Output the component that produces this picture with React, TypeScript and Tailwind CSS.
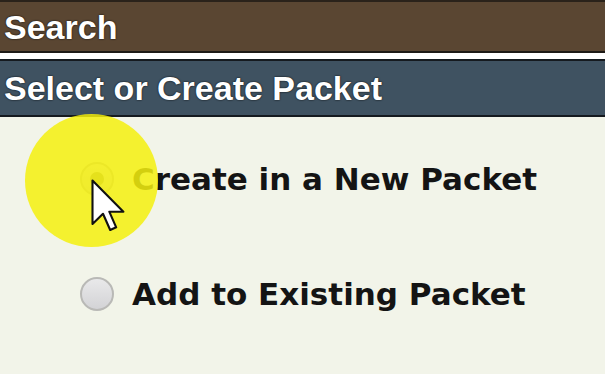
import React from 'react';

const headFont = { fontFamily: '"Liberation Sans", Arial, sans-serif' };
const bodyFont = { fontFamily: '"DejaVu Sans", Verdana, sans-serif' };

function Radio({ checked }: { checked?: boolean }) {
  return (
    <div className="w-[34px] h-[34px] rounded-full border-2 border-[#b9b9b6] bg-gradient-to-b from-[#e9e9ea] to-[#d3d3d6] flex items-center justify-center shrink-0">
      {checked && <div className="w-[14px] h-[14px] rounded-full bg-[#8a8a6a]" />}
    </div>
  );
}

function Cursor() {
  return (
    <svg width="36" height="54" viewBox="0 0 12 18" className="absolute left-[91px] top-[62px]">
      <path
        d="M0.5 0.5 L0.5 15 L4 11.6 L6.4 17 L8.4 16.1 L6.1 10.9 L10.8 10.9 Z"
        fill="#fff"
        stroke="#111"
        strokeWidth="0.7"
        strokeLinejoin="round"
      />
    </svg>
  );
}

export default function App() {
  return (
    <div className="w-[605px] h-[374px] overflow-hidden bg-[#f2f4e9] flex flex-col">
      <div className="h-[2px] bg-[#2a221a]" />
      <div className="h-[51px] bg-[#5a4632] flex items-center px-[4px] border-b-2 border-[#1e1a16]">
        <span className="text-white font-bold text-[34px] leading-none [text-shadow:0_0_2px_#000]" style={headFont}>
          Search
        </span>
      </div>
      <div className="h-[6px] bg-white" />
      <div className="h-[58px] bg-[#3f5261] flex items-center px-[4px] border-y-2 border-[#151a1f]">
        <span className="text-white font-bold text-[34px] leading-none [text-shadow:0_0_2px_#000]" style={headFont}>
          Select or Create Packet
        </span>
      </div>
      <div className="relative flex-1 flex flex-col gap-[75px] pt-[42px] pl-[80px]">
        <div className="flex items-center gap-[18px] h-[40px]">
          <Radio checked />
          <span className="font-bold text-[31px] text-[#141414]" style={bodyFont}>
            Create in a New Packet
          </span>
        </div>
        <div className="flex items-center gap-[18px] h-[40px]">
          <Radio />
          <span className="font-bold text-[31px] text-[#141414]" style={bodyFont}>
            Add to Existing Packet
          </span>
        </div>
        <div className="absolute left-[25px] top-[-3px] w-[133px] h-[133px] rounded-full bg-[#f5f00e] opacity-85" />
        <Cursor />
      </div>
    </div>
  );
}
